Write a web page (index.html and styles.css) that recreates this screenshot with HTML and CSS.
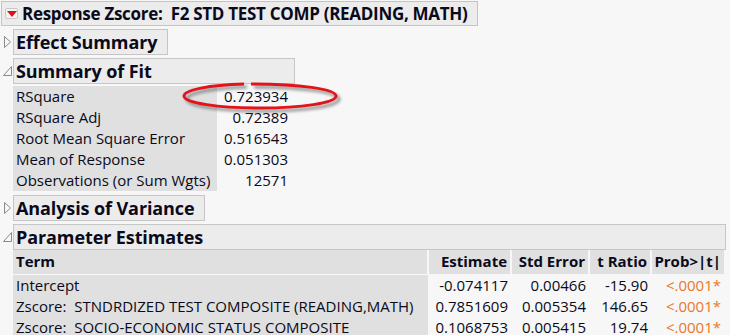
FILE: index.html
```html
<!DOCTYPE html>
<html>
<head>
	<meta http-equiv="Content-Type" content="text/html;charset=utf-8"/>
	<title>Fit Least Squares</title>
	<link rel="stylesheet" href="styles.css">
</head>
<body>
	<div class="report">
		<div class="title-bar">
			<span class="menu-btn"><svg width="10" height="6" viewBox="0 0 10 6"><polygon points="0,0 10,0 5,6" fill="#e0101a"/></svg></span>
			<span class="title-text">Response Zscore:&nbsp; F2 STD TEST COMP (READING, MATH)</span>
		</div>

		<div class="node">
			<div class="node-head">
				<svg class="tri" width="12" height="14" viewBox="0 0 12 14"><polygon points="3.5,1.5 9.5,7 3.5,12.5" fill="none" stroke="#8a8a8a"/></svg>
				<div class="head-box w-effect">Effect Summary</div>
			</div>
		</div>

		<div class="node">
			<div class="node-head">
				<svg class="tri" width="12" height="14" viewBox="0 0 12 14"><polygon points="10.5,2.5 10.5,11.5 2.5,11.5" fill="none" stroke="#8a8a8a"/></svg>
				<div class="head-box w-fit">Summary of Fit</div>
			</div>
			<div class="node-body">
				<table class="fit-table">
					<tr><td class="lbl">RSquare</td><td class="val">0.723934</td></tr>
					<tr><td class="lbl">RSquare Adj</td><td class="val">0.72389</td></tr>
					<tr><td class="lbl">Root Mean Square Error</td><td class="val">0.516543</td></tr>
					<tr><td class="lbl">Mean of Response</td><td class="val">0.051303</td></tr>
					<tr><td class="lbl">Observations (or Sum Wgts)</td><td class="val">12571</td></tr>
				</table>
				<svg class="circle-mark" width="170" height="40" viewBox="0 0 170 40">
					<defs>
						<filter id="sh" x="-10%" y="-40%" width="120%" height="180%">
							<feGaussianBlur stdDeviation="1.8"/>
						</filter>
					</defs>
					<path d="M73,9 C121,9 158,14 158,21 C158,28 123,33 82,33 C41,33 6,28 6,21 C6,15 31,10 66,9" fill="none" stroke="#555" stroke-width="3.5" filter="url(#sh)" opacity="0.55"/>
					<path d="M70,6 C118,6 155,11 155,18 C155,25 120,30 79,30 C38,30 3,25 3,18 C3,12 28,7 63,6" fill="none" stroke="#e2141a" stroke-width="3"/>
				</svg>
			</div>
		</div>

		<div class="node gap">
			<div class="node-head">
				<svg class="tri" width="12" height="14" viewBox="0 0 12 14"><polygon points="3.5,1.5 9.5,7 3.5,12.5" fill="none" stroke="#8a8a8a"/></svg>
				<div class="head-box w-anova">Analysis of Variance</div>
			</div>
		</div>

		<div class="node">
			<div class="node-head">
				<svg class="tri" width="12" height="14" viewBox="0 0 12 14"><polygon points="10.5,2.5 10.5,11.5 2.5,11.5" fill="none" stroke="#8a8a8a"/></svg>
				<div class="head-box w-est">Parameter Estimates</div>
			</div>
			<div class="node-body tight">
				<table class="est-table">
					<colgroup>
						<col class="c-term">
						<col class="c-est">
						<col class="c-se">
						<col class="c-t">
						<col class="c-p">
					</colgroup>
					<tr class="hdr">
						<th class="term">Term</th>
						<th>Estimate</th>
						<th>Std Error</th>
						<th>t Ratio</th>
						<th>Prob&gt;|t|</th>
					</tr>
					<tr>
						<td class="term">Intercept</td>
						<td class="num">-0.074117</td>
						<td class="num">0.00466</td>
						<td class="num">-15.90</td>
						<td class="num sig">&lt;.0001*</td>
					</tr>
					<tr>
						<td class="term">Zscore:&nbsp; STNDRDIZED TEST COMPOSITE (READING,MATH)</td>
						<td class="num">0.7851609</td>
						<td class="num">0.005354</td>
						<td class="num">146.65</td>
						<td class="num sig">&lt;.0001*</td>
					</tr>
					<tr>
						<td class="term">Zscore:&nbsp; SOCIO-ECONOMIC STATUS COMPOSITE</td>
						<td class="num">0.1068753</td>
						<td class="num">0.005415</td>
						<td class="num">19.74</td>
						<td class="num sig">&lt;.0001*</td>
					</tr>
				</table>
			</div>
		</div>
	</div>
</body>
</html>
```

FILE: styles.css
```css
*{
	margin: 0;
	padding: 0;
	box-sizing: border-box;
}
body{
	background: #f7f7f7;
	font-family: "Open Sans", "Noto Sans", sans-serif;
	font-size: 15px;
	color: #0a0a1a;
	overflow: hidden;
}
.report{
	padding: 1px 0 0 1px;
}
.title-bar{
	width: 477px;
	height: 25px;
	border: 1px solid #c4c4c4;
	background: #ececec;
	display: flex;
	align-items: center;
}
.menu-btn{
	width: 13px;
	height: 11px;
	margin: 0 4px 0 3px;
	border: 1px solid #c8c8c8;
	border-radius: 2px;
	background: #f4f4f4;
	display: flex;
	align-items: center;
	justify-content: center;
}
.title-text{
	font-weight: bold;
	font-size: 17px;
	letter-spacing: -0.3px;
}
.node{
	margin-top: 3px;
}
.node.gap{
	margin-top: 4px;
}
.node-head{
	display: flex;
	align-items: center;
}
.tri{
	width: 12px;
	flex: none;
}
.head-box{
	height: 26px;
	padding-left: 2px;
	border: 1px solid #c6c6c6;
	background: #ececec;
	font-weight: bold;
	font-size: 18px;
	line-height: 24px;
	letter-spacing: -0.1px;
	white-space: nowrap;
}
.w-effect{
	width: 155px;
}
.w-fit{
	width: 282px;
}
.w-anova{
	width: 192px;
}
.w-est{
	width: 713px;
}
.node-body{
	margin-left: 12px;
	padding-top: 2px;
	position: relative;
}
.node-body.tight{
	padding-top: 0;
}
table{
	border-collapse: collapse;
}
td, th{
	height: 21px;
	line-height: 21px;
	white-space: nowrap;
}
.fit-table .lbl{
	width: 204px;
	background: #e0e0e0;
	padding-left: 3px;
}
.fit-table .val{
	width: 75px;
	text-align: right;
	padding-right: 4px;
}
.circle-mark{
	position: absolute;
	left: 168px;
	top: -6px;
}
.est-table{
	width: 711px;
	table-layout: fixed;
}
.c-term{
	width: 415px;
}
.c-est{
	width: 83px;
}
.c-se{
	width: 78px;
}
.c-t{
	width: 62px;
}
.c-p{
	width: 73px;
}
.est-table th{
	background: #e0e0e0;
	font-weight: bold;
	height: 24px;
	text-align: right;
	padding-right: 3px;
	border-left: 2px solid #f7f7f7;
	border-bottom: 1px solid #f7f7f7;
}
.est-table th.term{
	text-align: left;
	padding-left: 3px;
	border-left: none;
}
.est-table td.term{
	background: #e0e0e0;
	padding-left: 3px;
}
.num{
	text-align: right;
	padding-right: 3px;
}
.sig{
	color: #e8782a;
}
```
